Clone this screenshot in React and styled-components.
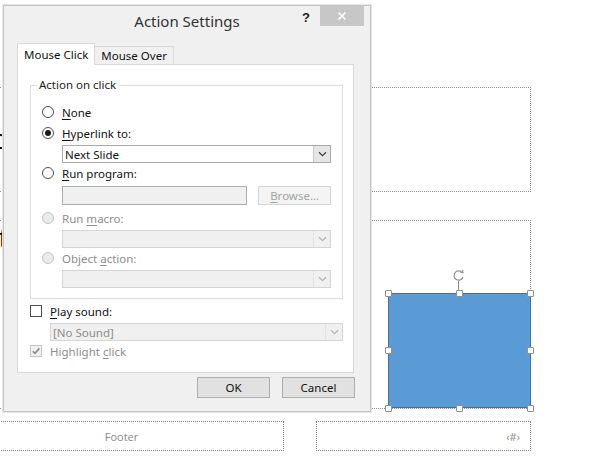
import React from 'react'
import styled, { createGlobalStyle } from 'styled-components'

const Global = createGlobalStyle`
  html, body { margin: 0; padding: 0; background: #fff; }
  body { font-family: "Noto Sans", "Open Sans", sans-serif; }
`

const Stage = styled.div`
  position: relative;
  width: 592px;
  height: 461px;
  overflow: hidden;
  background: #fff;
`

// slide canvas items
const Placeholder = styled.div`
  position: absolute;
  left: ${p => p.x}px;
  top: ${p => p.y}px;
  width: ${p => p.w}px;
  height: ${p => p.h}px;
  border: 1px dotted #8c8c8c;
  box-sizing: border-box;
  display: flex;
  align-items: center;
  justify-content: ${p => p.align || 'center'};
  padding: 0 10px;
  font-family: "Open Sans", "Noto Sans", sans-serif;
  font-size: 11px;
  color: #8a8a8a;
`

const SlideText = styled.span`
  position: absolute;
  left: ${p => p.x}px;
  top: ${p => p.y}px;
  font-family: "Liberation Sans", Arial, sans-serif;
  font-size: 28px;
  color: #111;
  line-height: 1;
`

const Shape = styled.div`
  position: absolute;
  left: 388px;
  top: 293px;
  width: 143px;
  height: 115px;
  background: #5b9bd5;
  border: 1px solid #41719c;
  box-sizing: border-box;
`

const Handle = styled.span`
  position: absolute;
  left: ${p => p.x - 3}px;
  top: ${p => p.y - 3}px;
  width: 7px;
  height: 7px;
  box-sizing: border-box;
  background: #fff;
  border: 1px solid #8f8f8f;
  border-radius: 1px;
`

const Rotate = styled.svg`
  position: absolute;
  left: 450px;
  top: 268px;
`

// dialog
const Dialog = styled.div`
  position: absolute;
  left: 3px;
  top: 5px;
  width: 368px;
  height: 407px;
  box-sizing: border-box;
  background: #f0f0f0;
  border: 1px solid #c4c4c4;
  box-shadow: 0 0 0 1px #e6e6e6;
  display: flex;
  flex-direction: column;
`

const TitleBar = styled.div`
  position: relative;
  height: 32px;
  display: flex;
  align-items: center;
  justify-content: center;
  font-size: 15px;
  color: #333;
  padding-bottom: 2px;
  box-sizing: border-box;
`

const TitleButtons = styled.div`
  position: absolute;
  right: 6px;
  top: 0;
  display: flex;
  align-items: flex-start;
  gap: 10px;
`

const Help = styled.span`
  font-family: "Liberation Sans", Arial, sans-serif;
  font-weight: bold;
  font-size: 13px;
  color: #222;
  margin-top: 4px;
`

const Close = styled.div`
  width: 44px;
  height: 20px;
  background: #c7c7c7;
  display: flex;
  align-items: center;
  justify-content: center;
`

const Body = styled.div`
  padding: 5px 16px 0 13px;
  display: flex;
  flex-direction: column;
  font-size: 11.5px;
`

const Tabs = styled.div`
  display: flex;
  align-items: flex-end;
  height: 22px;
  margin-bottom: -1px;
  position: relative;
  z-index: 1;
`

const Tab = styled.div`
  height: ${p => (p.active ? 22 : 19)}px;
  box-sizing: border-box;
  padding: 0 6px;
  display: flex;
  align-items: center;
  color: #111;
  background: ${p => (p.active ? '#fff' : '#f0f0f0')};
  border: 1px solid #d9d9d9;
  border-bottom: ${p => (p.active ? 'none' : '1px solid #d9d9d9')};
  margin-left: ${p => (p.active ? 0 : -1)}px;
`

const Panel = styled.div`
  background: #fff;
  border: 1px solid #d9d9d9;
  height: 309px;
  box-sizing: border-box;
  padding: 20px 10px 0 12px;
  display: flex;
  flex-direction: column;
`

const Group = styled.div`
  position: relative;
  border: 1px solid #dcdcdc;
  padding: 16px 11px 10px 11px;
  display: flex;
  flex-direction: column;
`

const Legend = styled.span`
  position: absolute;
  left: 6px;
  top: -9px;
  padding: 0 2px;
  background: #fff;
  color: #222;
  line-height: 16px;
`

const Row = styled.div`
  height: 20px;
  display: flex;
  align-items: center;
  gap: ${p => p.gap || 8}px;
  color: ${p => (p.disabled ? '#8d8d8d' : '#111')};
  margin-top: ${p => p.mt || 0}px;
`

const Key = styled.span`
  text-decoration: underline;
  text-underline-offset: 2px;
`

const Radio = styled.span`
  width: 12px;
  height: 12px;
  box-sizing: border-box;
  border-radius: 50%;
  border: 1px solid ${p => (p.disabled ? '#c4c4c4' : '#4d4d4d')};
  background: ${p => (p.disabled ? '#ebebeb' : '#fff')};
  display: flex;
  align-items: center;
  justify-content: center;
  &::after {
    content: '';
    width: 6px;
    height: 6px;
    border-radius: 50%;
    background: ${p => (p.checked ? '#1a1a1a' : 'transparent')};
  }
`

const Check = styled.span`
  width: 12px;
  height: 12px;
  box-sizing: border-box;
  border: 1px solid ${p => (p.disabled ? '#c4c4c4' : '#4d4d4d')};
  background: ${p => (p.disabled ? '#f0f0f0' : '#fff')};
  display: flex;
  align-items: center;
  justify-content: center;
`

const Indent = styled.div`
  margin-left: ${p => p.left}px;
  margin-top: ${p => p.mt || 0}px;
  display: flex;
  gap: 11px;
`

const Select = styled.div`
  flex: 1;
  height: 18px;
  box-sizing: border-box;
  border: 1px solid ${p => (p.disabled ? '#d5d5d5' : '#a9a9a9')};
  background: ${p => (p.disabled ? '#f0f0f0' : '#fff')};
  display: flex;
  align-items: stretch;
  color: ${p => (p.disabled ? '#8d8d8d' : '#111')};
`

const SelectText = styled.span`
  flex: 1;
  display: flex;
  align-items: center;
  padding-left: 2px;
`

const Arrow = styled.span`
  width: 16px;
  border-left: 1px solid ${p => (p.disabled ? '#e2e2e2' : '#c9c9c9')};
  background: ${p => (p.disabled ? '#f0f0f0' : '#e6e6e6')};
  display: flex;
  align-items: center;
  justify-content: center;
`

const Input = styled.div`
  width: 186px;
  height: 19px;
  box-sizing: border-box;
  border: 1px solid #adadad;
  background: #f0f0f0;
`

const Button = styled.div`
  width: ${p => p.w || 73}px;
  height: ${p => p.h || 21}px;
  box-sizing: border-box;
  border: 1px solid ${p => (p.disabled ? '#d5d5d5' : '#adadad')};
  background: ${p => (p.disabled ? '#f4f4f4' : '#e1e1e1')};
  color: ${p => (p.disabled ? '#a2a2a2' : '#111')};
  display: flex;
  align-items: center;
  justify-content: center;
`

const Footer = styled.div`
  display: flex;
  justify-content: flex-end;
  gap: 12px;
  margin-top: 4px;
  margin-right: -1px;
`

const Chevron = ({ color = '#444' }) => (
  <svg width="9" height="6" viewBox="0 0 9 6">
    <path d="M1 1.2 L4.5 4.6 L8 1.2" fill="none" stroke={color} strokeWidth="1.3" />
  </svg>
)

const Dropdown = ({ value, disabled }) => (
  <Select disabled={disabled}>
    <SelectText>{value}</SelectText>
    <Arrow disabled={disabled}>
      <Chevron color={disabled ? '#b5b5b5' : '#444'} />
    </Arrow>
  </Select>
)

const handles = [
  [388, 293], [459, 293], [530, 293],
  [388, 350], [530, 350],
  [388, 408], [459, 408], [530, 408],
]

export default function App() {
  return (
    <Stage>
      <Global />
      {/* slide behind the dialog */}
      <Placeholder x={-10} y={87} w={541} h={105} />
      <Placeholder x={-10} y={220} w={541} h={189} />
      <SlideText x={-7} y={126}>c</SlideText>
      <SlideText x={-1} y={225}>t</SlideText>
      <Placeholder x={-41} y={421} w={325} h={30}>Footer</Placeholder>
      <Placeholder x={316} y={421} w={215} h={30} align="flex-end">‹#›</Placeholder>

      <Shape />
      <Rotate width="18" height="26" viewBox="0 0 18 26">
        <path d="M12.2 4.6 A4.6 4.6 0 1 0 13 9" fill="none" stroke="#8f8f8f" strokeWidth="1.2" />
        <path d="M10.4 4.2 L13 4.5 L12.6 1.9" fill="none" stroke="#8f8f8f" strokeWidth="1.1" />
        <line x1="8.5" y1="13" x2="8.5" y2="25" stroke="#8f8f8f" strokeWidth="1" />
      </Rotate>
      {handles.map(([x, y]) => (
        <Handle key={`${x}-${y}`} x={x} y={y} />
      ))}

      <Dialog>
        <TitleBar>
          Action Settings
          <TitleButtons>
            <Help>?</Help>
            <Close>
              <svg width="10" height="10" viewBox="0 0 10 10">
                <path d="M1.5 1.5 L8.5 8.5 M8.5 1.5 L1.5 8.5" stroke="#fff" strokeWidth="1.6" />
              </svg>
            </Close>
          </TitleButtons>
        </TitleBar>

        <Body>
          <Tabs>
            <Tab active>Mouse Click</Tab>
            <Tab>Mouse Over</Tab>
          </Tabs>
          <Panel>
            <Group>
              <Legend>Action on click</Legend>
              <Row>
                <Radio />
                <span><Key>N</Key>one</span>
              </Row>
              <Row mt={1}>
                <Radio checked />
                <span><Key>H</Key>yperlink to:</span>
              </Row>
              <Indent left={20} mt={2}>
                <Dropdown value="Next Slide" />
              </Indent>
              <Row>
                <Radio />
                <span><Key>R</Key>un program:</span>
              </Row>
              <Indent left={20} mt={3}>
                <Input />
                <Button disabled w={73} h={19}>
                  <span><Key>B</Key>rowse...</span>
                </Button>
              </Indent>
              <Row mt={3} disabled>
                <Radio disabled />
                <span>Run <Key>m</Key>acro:</span>
              </Row>
              <Indent left={20} mt={2}>
                <Dropdown value="" disabled />
              </Indent>
              <Row disabled>
                <Radio disabled />
                <span>Object <Key>a</Key>ction:</span>
              </Row>
              <Indent left={20} mt={2}>
                <Dropdown value="" disabled />
              </Indent>
            </Group>

            <Row mt={2}>
              <Check />
              <span><Key>P</Key>lay sound:</span>
            </Row>
            <Indent left={20} mt={2}>
              <Dropdown value="[No Sound]" disabled />
            </Indent>
            <Row disabled>
              <Check disabled>
                <svg width="10" height="10" viewBox="0 0 10 10">
                  <path d="M1.8 5.2 L4 7.4 L8.4 2.4" fill="none" stroke="#8a8a8a" strokeWidth="1.6" />
                </svg>
              </Check>
              <span>Highlight <Key>c</Key>lick</span>
            </Row>
          </Panel>

          <Footer>
            <Button>OK</Button>
            <Button>Cancel</Button>
          </Footer>
        </Body>
      </Dialog>
    </Stage>
  )
}
